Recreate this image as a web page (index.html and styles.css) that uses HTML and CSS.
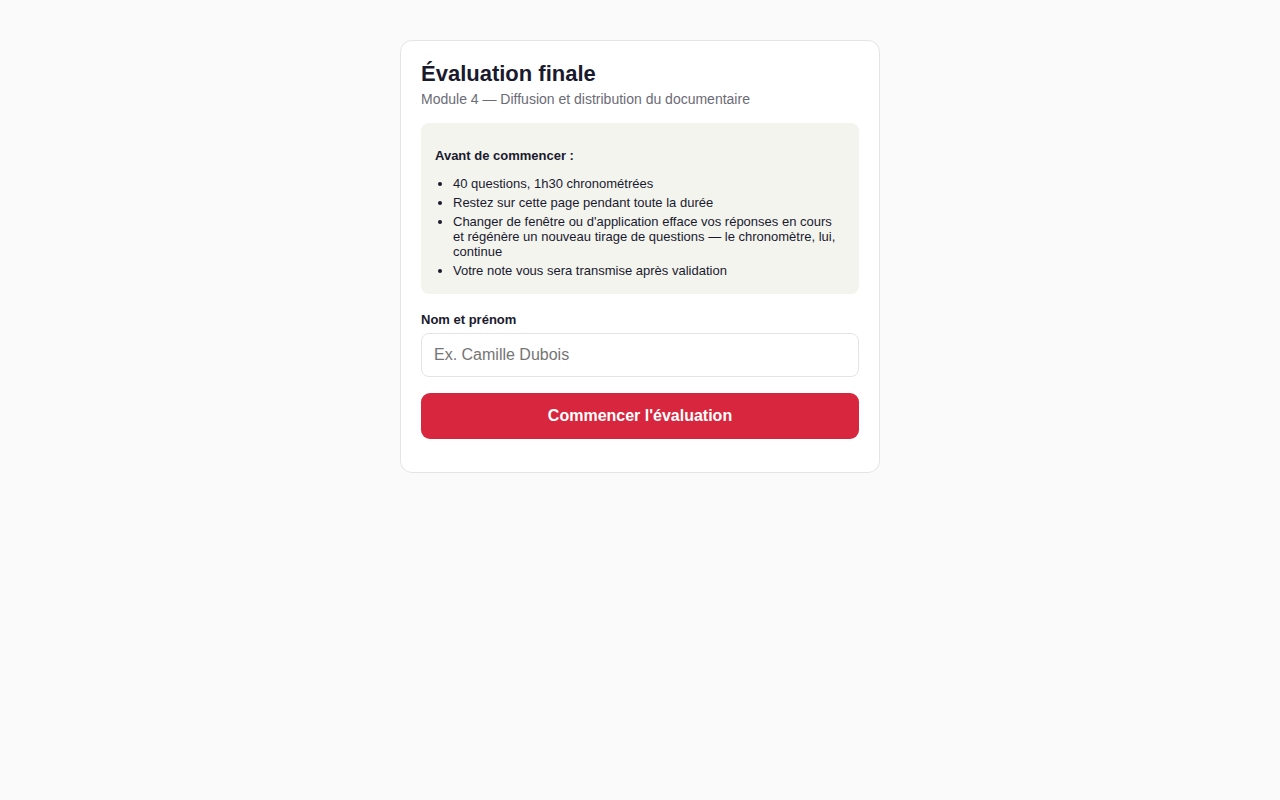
FILE: index.html
```html
<!DOCTYPE html>
<html lang="fr">
	<head>
		<meta charset="UTF-8">
		<title>Évaluation finale</title>
		<link rel="stylesheet" href="styles.css">
	</head>
	<body>
		<div class="card">
			<h1 class="title">Évaluation finale</h1>
			<p class="sub">Module 4 — Diffusion et distribution du documentaire</p>
			<div class="notice">
				<p class="notice_h">Avant de commencer :</p>
				<ul class="notice_list">
					<li>40 questions, 1h30 chronométrées</li>
					<li>Restez sur cette page pendant toute la durée</li>
					<li>Changer de fenêtre ou d'application efface vos réponses en cours et régénère un nouveau tirage de questions — le chronomètre, lui, continue</li>
					<li>Votre note vous sera transmise après validation</li>
				</ul>
			</div>
			<form class="form" onsubmit="return false">
				<label class="label" for="nom">Nom et prénom</label>
				<input class="input" id="nom" type="text" placeholder="Ex. Camille Dubois">
				<button class="btn" type="submit">Commencer l'évaluation</button>
			</form>
		</div>
	</body>
</html>
```

FILE: styles.css
```css
body,
h1,
p,
ul {
    margin: 0;
    padding: 0;
}

body {
    background: #fafafa;
    font-family: "Liberation Sans", Arial, sans-serif;
    color: #1a1a2e;
    padding-top: 40px;
}

.card {
    width: 480px;
    margin: 0 auto;
    box-sizing: border-box;
    background: #fff;
    border: 1px solid #e4e4e7;
    border-radius: 12px;
    padding: 20px 20px 33px;
}

.title {
    font-size: 22px;
    line-height: 26px;
    font-weight: bold;
    margin-bottom: 4px;
}

.sub {
    font-size: 14px;
    line-height: 17px;
    color: #6b6b76;
    margin-bottom: 15px;
}

.notice {
    background: #f3f4ee;
    border-radius: 8px;
    padding: 25px 14px 16px;
}

.notice_h {
    font-size: 13px;
    line-height: 15px;
    font-weight: bold;
    margin-bottom: 13px;
}

.notice_list {
    padding-left: 18px;
    font-size: 13px;
    line-height: 15px;
}

.notice_list li {
    margin-bottom: 4px;
}

.notice_list li:last-child {
    margin-bottom: 0;
}

.form {
    display: flex;
    flex-direction: column;
    margin-top: 18px;
}

.label {
    font-size: 13px;
    line-height: 15px;
    font-weight: bold;
    margin-bottom: 6px;
}

.input {
    height: 44px;
    box-sizing: border-box;
    border: 1px solid #e4e4e7;
    border-radius: 8px;
    padding: 0 12px;
    font: 16px "Liberation Sans", Arial, sans-serif;
    color: #1a1a2e;
    margin-bottom: 16px;
    outline: none;
}

.input::placeholder {
    color: #757575;
}

.btn {
    height: 46px;
    border: 0;
    border-radius: 9px;
    background: #d7263d;
    color: #fff;
    font: bold 16px "Liberation Sans", Arial, sans-serif;
    cursor: pointer;
}
```
